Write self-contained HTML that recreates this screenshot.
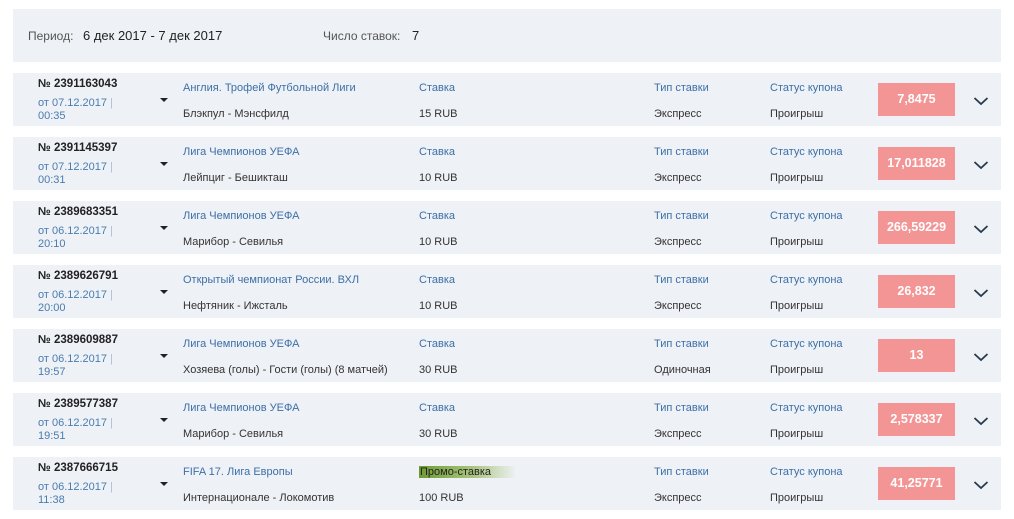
<!DOCTYPE html>
<html><head><meta charset="utf-8"><style>
body{margin:0;width:1014px;height:519px;background:#fff;font-family:"Liberation Sans",Arial,sans-serif;position:relative;overflow:hidden;color:#333}
.hdr{position:absolute;left:13px;top:9px;width:988px;height:53px;background:#eef1f5}
.hdr span{position:absolute;top:20px;font-size:12px}
.row{position:absolute;left:13px;width:988px;height:53px;background:#eef1f5;font-size:11px}
.row div{position:absolute;white-space:nowrap}
.num{left:25px;top:5px;font-weight:bold;color:#222;font-size:11.5px}
.dt{left:25px;top:24px;color:#4a7cb0;line-height:13px;font-size:11px}
.dt i{font-style:normal;color:#a8c0dc}
.tri{left:147px;top:25px;width:0;height:0;border-left:4px solid transparent;border-right:4px solid transparent;border-top:4px solid #222}
.b{color:#3d6fa8}
.k{color:#333}
.coef{left:865px;top:10px;width:77px;height:33px;background:#f39595;color:#fff;font-weight:bold;font-size:12.5px;text-align:center;line-height:33px}
.chev{left:960px;top:23px}
.promo{background:linear-gradient(90deg,#6e9a32 0%,#a9c47e 55%,rgba(238,241,245,0) 100%);color:#222;width:96px;padding-left:1px}
</style></head><body>
<div class="hdr"><span style="left:15px;color:#555">Период:</span><span style="left:70px;font-size:13px;top:19px;color:#222">6 дек 2017 - 7 дек 2017</span><span style="left:310px;color:#555">Число ставок:</span><span style="left:399px;font-size:13px;top:19px;color:#222">7</span></div>
<div id="rows"></div>
<script>
var d=[["2391163043","07.12.2017","00:35","Англия. Трофей Футбольной Лиги","Блэкпул - Мэнсфилд","15 RUB","Экспресс","7,8475"],
["2391145397","07.12.2017","00:31","Лига Чемпионов УЕФА","Лейпциг - Бешикташ","10 RUB","Экспресс","17,011828"],
["2389683351","06.12.2017","20:10","Лига Чемпионов УЕФА","Марибор - Севилья","10 RUB","Экспресс","266,59229"],
["2389626791","06.12.2017","20:00","Открытый чемпионат России. ВХЛ","Нефтяник - Ижсталь","10 RUB","Экспресс","26,832"],
["2389609887","06.12.2017","19:57","Лига Чемпионов УЕФА","Хозяева (голы) - Гости (голы) (8 матчей)","30 RUB","Одиночная","13"],
["2389577387","06.12.2017","19:51","Лига Чемпионов УЕФА","Марибор - Севилья","30 RUB","Экспресс","2,578337"],
["2387666715","06.12.2017","11:38","FIFA 17. Лига Европы","Интернационале - Локомотив","100 RUB","Экспресс","41,25771"]];
var h="";
d.forEach(function(r,i){var t=73+i*64;
h+='<div class="row" style="top:'+t+'px"><div class="num">№ '+r[0]+'</div><div class="dt">от '+r[1]+' <i>|</i><br>'+r[2]+'</div><div class="tri"></div>'+
'<div class="b" style="left:170px;top:9px">'+r[3]+'</div><div class="k" style="left:170px;top:35px">'+r[4]+'</div>'+
(i==6?'<div class="promo" style="left:406px;top:9px">Промо-ставка</div>':'<div class="b" style="left:406px;top:9px">Ставка</div>')+
'<div class="k" style="left:406px;top:35px">'+r[5]+'</div><div class="b" style="left:641px;top:9px">Тип ставки</div><div class="k" style="left:641px;top:35px">'+r[6]+'</div>'+
'<div class="b" style="left:757px;top:9px">Статус купона</div><div class="k" style="left:757px;top:35px">Проигрыш</div><div class="coef">'+r[7]+'</div>'+
'<div class="chev"><svg width="16" height="10"><path d="M1.5 2 L8 8 L14.5 2" fill="none" stroke="#2a3a4e" stroke-width="1.8"/></svg></div></div>';});
document.getElementById("rows").innerHTML=h;
</script>
</body></html>
